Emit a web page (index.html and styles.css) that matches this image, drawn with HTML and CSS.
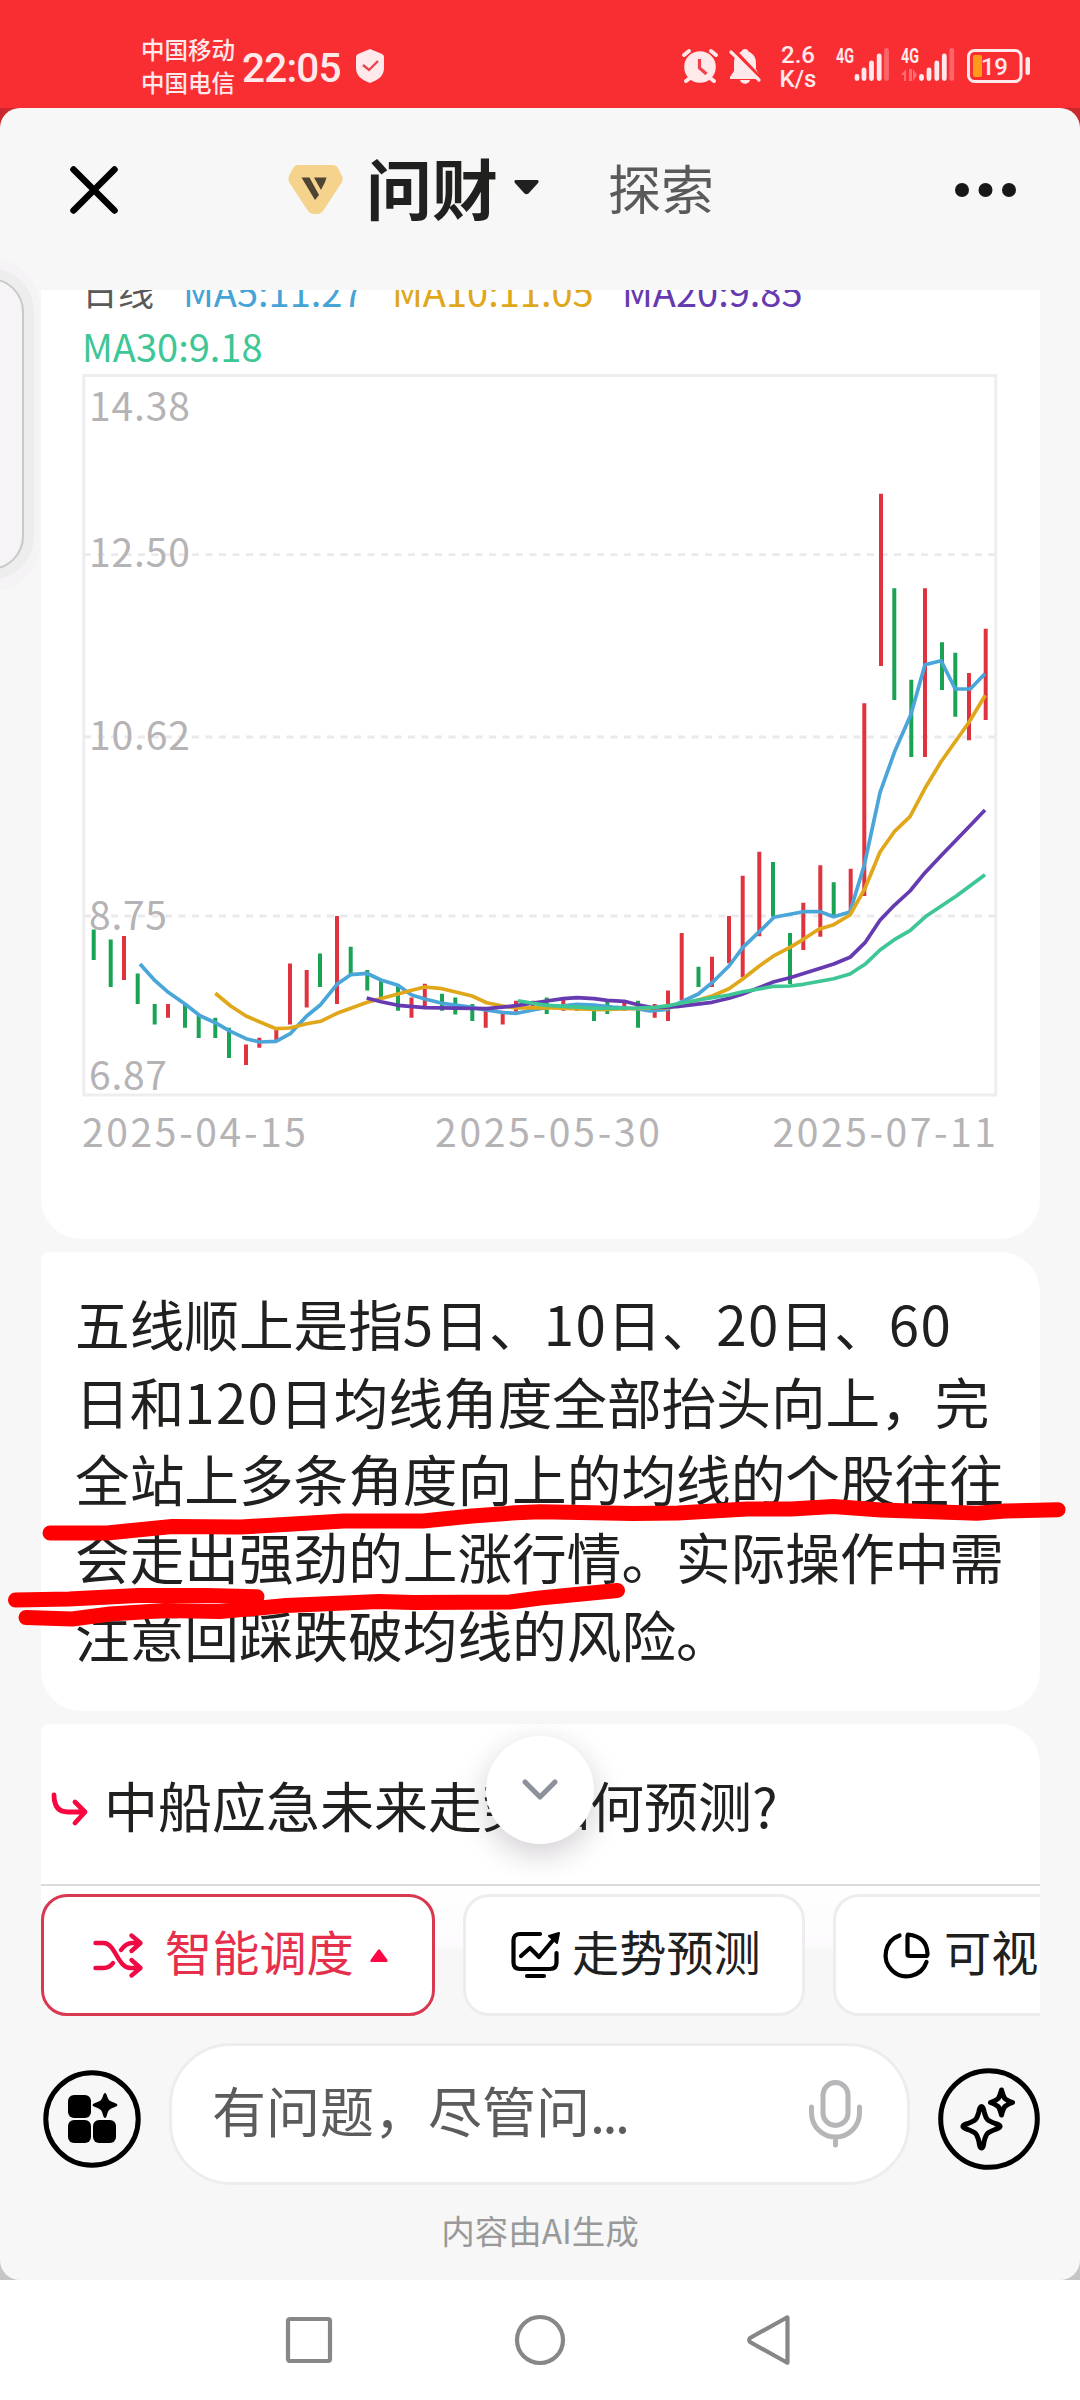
FILE: index.html
```html
<!DOCTYPE html>
<html lang="zh-CN">
<head>
<meta charset="utf-8">
<title>问财</title>
<link rel="stylesheet" href="styles.css">
</head>
<body>
<div class="phone">
  <header class="status">
    <div class="carriers"><span>中国移动</span><span>中国电信</span></div>
    <div class="clock">22:05</div>
    <svg class="shield" width="28" height="34" viewBox="0 0 28 34"><path d="M14 0 26 5q2 1 2 3v11c0 8-6 12-14 15C6 31 0 27 0 19V8q0-2 2-3z" fill="#ffe9eb"/><path d="m7 16 6 5 9-9" fill="none" stroke="#e8454d" stroke-width="2.4"/></svg>
    <svg class="alarm" width="36" height="34" viewBox="0 0 36 34"><circle cx="18" cy="18" r="15.8" fill="#ffe9eb"/><path d="M2 6 7 2M34 6l-5-4M8 29l-4 3M28 29l4 3" stroke="#ffe9eb" stroke-width="4" stroke-linecap="round"/><path d="M17.500 10v9l7 6" fill="none" stroke="#f3404a" stroke-width="3.200"/></svg>
    <svg class="bell" width="32" height="35" viewBox="0 0 32 35"><path d="M16 0c2 0 3 1 3.500 2.500C25 5 27 9 27 14v6l4 8v2H1v-2l4-6v-8C5 9 7 5 12.500 2.500 13 1 14 0 16 0zM11 31h10c-1 5-9 5-10 0z" fill="#ffe9eb"/><path d="M4 0 34 32" stroke="#f92e33" stroke-width="4"/><path d="m2 3 28 28" stroke="#ffe9eb" stroke-width="3.200" stroke-linecap="round"/></svg>
    <div class="speed"><span>2.6</span><span>K/s</span></div>
    <svg class="signal" width="118" height="38" viewBox="836 46 118 38">
      <g class="net"><text x="836" y="63" textLength="18" lengthAdjust="spacingAndGlyphs">4G</text><text x="901" y="63" textLength="18" lengthAdjust="spacingAndGlyphs">4G</text></g>
      <g stroke="#ffe9eb" stroke-width="4.800" stroke-linecap="round"><path d="M857 76.500v2M864 70v8.500M871.500 63v15.500M879.200 56v22.500M921.500 76.500v2M929 70v8.500M936.800 63v15.500M944.300 56v22.500"/><path d="M886.500 50.500v28M951.800 50.500v28" opacity=".3"/></g>
      <path d="M906 69v12h-2V75h-3zM909 69v12h3V69zM913 69v12l4-6z" fill="#ff6d73"/>
    </svg>
    <svg class="battery" width="64" height="34" viewBox="0 0 64 34"><rect x="1.500" y="1.500" width="52.500" height="31" rx="6" fill="none" stroke="#ffe9eb" stroke-width="3"/><rect x="6" y="6" width="9" height="22" rx="2" fill="#ff9a1b"/><rect x="58.500" y="8" width="4.500" height="18" rx="2" fill="#ffe9eb"/><text x="14" y="26" textLength="27">19</text></svg>
  </header>

  <div class="stage">
  <main class="sheet">
    <div class="topbar">
      <svg class="close" width="48" height="48" viewBox="0 0 48 48"><path d="m3.500 3.500 41 41m0-41-41 41" stroke="#000" stroke-width="6.500" stroke-linecap="round"/></svg>
      <svg class="badge" width="55" height="49" viewBox="0 0 55 49"><path d="M10 0h35q3 0 5 3l4 8q1.500 3 0 6L35 46q-2 3-5 3h-5q-3 0-5-3L1 17q-1.500-3 0-6l4-8q2-3 5-3z" fill="#f6d38c"/><path d="M13.500 12.500h8L31 30l-4 5zM26 12.500h12.500L37 17l-4 8z" fill="#4e4434"/></svg>
      <h1>问财</h1>
      <svg class="caret" width="25" height="15" viewBox="0 0 25 15"><path d="M1.500 0h22q2 1 .5 3L14.500 13.500q-2 1.500-4 0L1 3q-1.500-2 .5-3z" fill="#20211f"/></svg>
      <span class="explore">探索</span>
      <svg class="more" width="62" height="14" viewBox="0 0 62 14" fill="#181818"><circle cx="7" cy="7" r="7"/><circle cx="30.500" cy="7" r="7"/><circle cx="54" cy="7" r="7"/></svg>
    </div>

    <div class="feed">
      <section class="card chart-card">
        <div class="legend"><span class="day">日线</span><span class="ma5">MA5:11.27</span><span class="ma10">MA10:11.05</span><span class="ma20">MA20:9.85</span></div>
        <div class="legend second"><span class="ma30">MA30:9.18</span></div>
        <svg class="chart" width="999" height="790" viewBox="41 370 999 790">
          <rect x="83.800" y="375.500" width="912" height="719.500" class="frame"/>
          <path d="M84 554.700H995M84 737H995M84 916H995" class="grid"/>
          <g class="axis">
            <text x="89" y="421" textLength="101">14.38</text><text x="89" y="567" textLength="101">12.50</text><text x="89" y="749.500" textLength="101">10.62</text><text x="89" y="929.500" textLength="78">8.75</text><text x="89" y="1089.500" textLength="78">6.87</text>
            <text x="82" y="1147" textLength="224">2025-04-15</text><text x="435" y="1147" textLength="225">2025-05-30</text><text x="772.500" y="1147" textLength="223.500">2025-07-11</text>
          </g>
          <path class="up" d="M124 936V980M168 1004V1017.700M246 1044.500V1065M259.300 1037.700V1047.700M276.300 1027.700V1041.500M290 963.500V1024.500M306.700 970V1007.500M337 916V1004M411.500 997.500V1017.700M424.800 983.700V1007M485.700 1010.700V1027.700M502.700 1010.700V1024.500M516 1000.700V1011.700M533 1000.700V1010M563.300 998V1010.700M577 1004V1010.700M624.300 1000.700V1010.700M654.700 1004V1017.700M668 990.500V1021M681.700 933V1000M712 956.700V987M729 916V963.300M742.700 875.700V977.300M759.300 851.700V936.300M803.300 902.700V950M820.300 865.300V936.700M850.700 868.700V913M864.300 703.300V896M881 493.700V666M925 588.300V757M969 673V740.300M985.700 628.700V720"/>
          <path class="down" d="M93.700 929.500V960M110.700 939.500V987M137.700 973.500V1004M154.700 1004V1024.500M185 1004V1027.700M198.700 1014V1038M215.300 1017.700V1038M229 1027.700V1058M320 953.500V987M350.700 946.700V975M367.300 970V990.500M381 980V997.500M398 984V1010.700M442 993.700V1010.700M455.300 997.500V1014.500M472.300 1004V1021M546.700 997.500V1014M594 1005V1021M607.300 1001V1014M638 1000.700V1027.700M698.500 966.700V987M773 862V916.700M790 933V984M833.700 882.300V916M894.300 588.300V700M911.300 679.700V757M942 642.300V690M955.300 652.700V716.700"/>
          <polyline class="line l5" points="140,964 155,980.700 168.300,992.300 185,1004 200,1015.700 215.300,1022.700 229,1030.700 246,1038.700 260,1042 276,1041.300 290.700,1033.300 306.700,1016 320,1005.300 337,984.300 350.700,974.700 366.700,973.300 381,980 398,985.300 411.700,995 425,999 442,1003.300 466.700,1006.500 485.700,1010 502.700,1012.500 516.700,1013.300 533,1010 546.700,1007.500 577,1004.300 594,1005 613,1007 638,1009 650,1011 667,1009.300 681.700,1001.700 698.300,994 712,982.700 729,966 742.700,947.700 759.300,931.700 774,917.300 803.300,911.700 820.300,911.700 833.700,916.700 850,912 864.300,865 880,792.700 895,750.700 910.700,715 925,664.700 941,660.700 955.300,689 970.300,689 985,673.700"/>
          <polyline class="line l10" points="215.300,993.300 230.700,1006 246,1016 276,1028.700 290,1028 306.700,1023.700 320.700,1021.300 337,1013.300 367.300,1002.300 398,994 411.700,990.300 425,987 442,988.700 456.700,992.300 472,996 486.700,1002.700 502.700,1006 516.700,1008 546.700,1007.700 600,1009.700 638,1008.300 653,1008 668,1007.700 683,1003.700 698.300,1000 712,996 729,988.700 742.700,979 759.300,966 774,955.700 790,947.300 803.300,939.300 818.700,929.300 833.700,924.700 850,915 865,888.300 880,852 894.300,831.700 910,816.700 925,788.300 941,761.700 969,722.300 985.300,695.300"/>
          <polyline class="line l20" points="366.700,998 381,1001.700 398,1005.300 425,1007.700 486.700,1008.700 516,1005.700 546.700,1001 563.300,998.700 577,997.700 594,998.700 607.300,1000.300 624.300,1001.300 638,1004.700 653,1007.700 676.700,1006.700 712,1002.300 729,998.300 742.700,994 774,981.700 790,977.700 820.300,968.300 833.700,964 850,957.300 865,942.700 880,920.300 894.300,905.300 910,891 925,872.700 941.700,855 970,825.700 985,810"/>
          <polyline class="line l30" points="518,1000.700 533,1003.300 546.700,1005.300 600,1008.300 638,1008 654.700,1007.300 670,1005.300 698.300,1000 729,995 742.700,991.700 774,986.300 790,986 803.300,984.300 833.700,978.700 850,974 865,964.300 880,950 894.300,939.700 910,930.700 926.700,915.700 956.700,895.700 985,874.700"/>
        </svg>
      </section>

      <section class="card note">
        <p>五线顺上是指<b>5</b>日、<b>10</b>日、<b>20</b>日、<b>60</b></p>
        <p>日和<b>120</b>日均线角度全部抬头向上，完</p>
        <p>全站上多条角度向上的均线的个股往往</p>
        <p>会走出强劲的上涨行情。实际操作中需</p>
        <p>注意回踩跌破均线的风险。</p>
      </section>

      <section class="card ask">
        <svg width="38" height="34" viewBox="0 0 38 34" fill="none" stroke="#fb0540" stroke-width="4.800" stroke-linecap="round" stroke-linejoin="round"><path d="M3 3c0 12 5 17 14 17h17M24 10l10 10-10 11"/></svg>
        <span>中船应急未来走势如何预测?</span>
      </section>
    </div>

    <div class="chips">
      <div class="chip active">
        <svg width="50" height="45" viewBox="0 0 50 45" fill="none" stroke="#ee0b43" stroke-width="4.400" stroke-linecap="round" stroke-linejoin="round"><path d="M2.500 10h8c12 0 14 25 27 25h9M38.500 27l9 8-9 7.500M2.500 35h8q6 0 9.500-5M28 17q5-7 11-7h8M38.500 2.500l9 7.500-9 8"/></svg>
        <span>智能调度</span>
        <svg class="tri" width="18" height="13" viewBox="0 0 18 13"><path d="M8 .7q1-1 2 0l7.500 10.300q.7 2-1 2h-15q-1.700 0-1-2z" fill="#ff0745"/></svg>
      </div>
      <div class="chip trend">
        <svg width="50" height="48" viewBox="0 0 50 48" fill="none" stroke="#000" stroke-width="4.200" stroke-linecap="round" stroke-linejoin="round"><path d="M29 3H9Q2.500 3 2.500 9.500v22Q2.500 38 9 38h30q6.500 0 6.500-6.500V22M16 45h17M10 25l9-8 9 9L43 8"/><path d="m38 5 10-3-2 10z" fill="#000" stroke-width="2"/></svg>
        <span>走势预测</span>
      </div>
      <div class="chip visual">
        <svg width="47" height="47" viewBox="0 0 47 47" fill="none" stroke="#000" stroke-width="4.200" stroke-linecap="round" stroke-linejoin="round"><path d="M16.500 3.500A21 21 0 1 0 43.500 30M25 2.500q19 2 19.500 19.500-.2 2-2 2H27q-2.500 0-2.500-2.500V4z"/></svg>
        <span>可视化</span>
      </div>
    </div>

    <div class="composer">
      <svg width="98" height="98" viewBox="0 0 98 98"><circle cx="49" cy="49" r="46.200" fill="none" stroke="#000" stroke-width="5"/><g><rect x="25" y="25" width="23" height="23" rx="6"/><rect x="25" y="50" width="23" height="23" rx="6"/><rect x="50" y="50" width="23" height="23" rx="6"/><path d="M62 23q1 0 1.700 2c1.600 5 2.300 6 8.300 8q2.500 1.200 2.500 2t-2.500 2c-6 2-6.700 3-8.300 9q-.7 2-1.700 2t-1.700-2c-1.600-6-2.300-7-8.300-9q-2.500-1.200-2.500-2t2.500-2c6-2 6.700-3 8.300-8q.7-2 1.700-2z"/></g></svg>
      <div class="field">
        <span>有问题，尽管问<i>...</i></span>
        <svg width="53" height="68" viewBox="0 0 53 68" fill="none" stroke="#b7b5b8" stroke-width="5" stroke-linecap="round"><rect x="14" y="2.500" width="25" height="43" rx="12.500"/><path d="M2.500 27v6a24 24 0 0 0 48 0v-6M26.500 57v8"/></svg>
      </div>
      <svg width="102" height="102" viewBox="0 0 102 102" fill="none" stroke="#000" stroke-width="5" stroke-linejoin="round"><circle cx="51" cy="51" r="48.300"/><path d="M43.500 38.500c1.500 0 2 2 2.600 5 2 8 3 9 11 12 4 1.200 5 1.800 5 3s-1 1.800-5 3c-8 3-9 4-11 12-.6 4-1.100 6.500-2.600 6.500s-2-2.500-2.600-6.500c-2-8-3-9-11-12-4-1.200-5-1.800-5-3s1-1.800 5-3c8-3 9-4 11-12 .6-3 1.100-5 2.600-5z"/><path d="M63.500 22c2.500 9 2.500 9 11 12.500-8.500 3.500-8.500 3.500-11 12.500-2.500-9-2.500-9-11-12.500 8.500-3.500 8.500-3.500 11-12.500z"/></svg>
    </div>
    <div class="notice">内容由AI生成</div>
  </main>
  </div>

  <nav class="sysnav">
    <svg width="46" height="46" viewBox="0 0 46 46"><rect x="2" y="2" width="42" height="42" rx="2"/></svg>
    <svg width="50" height="50" viewBox="0 0 50 50"><circle cx="25" cy="25" r="23"/></svg>
    <svg width="43" height="50" viewBox="0 0 43 50"><path d="M40.500 3v44q0 1.500-1.500 0L3 27q-1.500-2 0-4L39 3q1.500-1.500 1.500 0z"/></svg>
  </nav>

  <div class="side-handle"><div></div></div>
  <div class="to-bottom"><svg width="36" height="22" viewBox="0 0 36 22"><path d="m3 3 15 15L33 3" fill="none" stroke="#8d919b" stroke-width="5.200" stroke-linecap="round" stroke-linejoin="round"/></svg></div>
  <svg class="marker" width="1080" height="140" viewBox="0 1490 1080 140">
    <polyline points="50,1533 107,1533 172,1526.500 241,1527 344,1521 423,1521 472,1516 516,1512.700 540,1511.700 633,1513.500 678,1513 747,1509 791,1509 833,1506.500 881,1510 977,1513.300 1005,1511 1058,1509.700"/>
    <polyline points="15.500,1600 69,1599 138,1595.500 207,1595.500 257,1596.700"/>
    <polyline points="26,1617.500 72,1619 110,1614 165,1610.500 220,1611.500 286,1605.500 379,1601.500 413,1602.500 510,1602 540,1598 617.500,1590.500"/>
  </svg>
</div>
</body>
</html>
```
FILE: styles.css
```css
* { box-sizing: border-box; }
body { margin: 0; background: #fff; }
svg { display: block; flex: none; overflow: visible; }
.phone {
  position: relative;
  width: 1080px;
  height: 2400px;
  overflow: hidden;
  display: flex;
  flex-direction: column;
  font-family: "Noto Sans CJK SC", sans-serif;
  color: #20211f;
  white-space: nowrap;
}

/* status bar */
.status {
  height: 108px;
  padding: 0 50px 0 141px;
  background: #f92e33;
  color: #ffe9eb;
  display: flex;
  align-items: flex-start;
}
.carriers { display: flex; flex-direction: column; margin-top: 33px; width: 101px; font-size: 23.5px; line-height: 33px; font-weight: 500; }
.clock { width: 114px; margin-top: 43px; font: 500 40.500px/50px Roboto, sans-serif; letter-spacing: -.8px; }
.shield { margin-top: 49px; }
.alarm { margin: 49px 11px 0 auto; }
.bell { margin-top: 49px; }
.speed { width: 55px; margin: 43px 0 0 0; padding-left: 19px; display: flex; flex-direction: column; align-items: center; font: 500 24px/24px Roboto, sans-serif; }
.signal { margin: 46px 13px 0 20px; }
.net text { font: 700 21px Roboto, sans-serif; fill: #ffe9eb; }
.battery { margin-top: 49px; margin-right: -1px; }
.battery text { font: 500 24px Roboto, sans-serif; fill: #ffe9eb; }

/* sheet */
.stage { height: 2172px; background: linear-gradient(#c9282d 0 50%, #c6c6c6 50%); }
.sheet { height: 2172px; background: #f7f7f7; border-radius: 20px; display: flex; flex-direction: column; }
.topbar { height: 182px; padding: 0 63px 19px 70px; display: flex; align-items: center; }
.badge { margin-left: 170px; }
h1 { margin: 0 0 8px 23px; font-size: 66px; line-height: 90px; font-weight: 700; }
.caret { margin: -4px 0 0 16px; }
.explore { margin: 0 auto 6px 69px; font-size: 53px; line-height: 70px; color: #5a5a5a; }

.feed { width: 999px; height: 1596px; margin-left: 41px; overflow: hidden; display: flex; flex-direction: column; gap: 13px; border-bottom: 2px solid #dcdbdc; }
.card { flex: none; background: #fff; border-radius: 8px 40px 40px 40px; }
.chart-card { height: 949px; border-radius: 0 0 40px 40px; }
.legend { height: 55px; margin-top: -27px; padding-left: 41px; display: flex; font-size: 38px; line-height: 55px; }
.legend.second { margin-top: 0; }
.day { width: 101px; font-size: 36px; color: #5a5a5a; }
.ma5 { width: 209px; color: #45a3d6; }
.ma10 { width: 230px; color: #e0a71b; }
.ma20 { color: #663ab0; }
.ma30 { color: #3ec695; }
.chart { margin-top: -3px; }
.frame { fill: none; stroke: #efedef; stroke-width: 3; }
.grid { fill: none; stroke: #ece9ec; stroke-width: 2.800; stroke-dasharray: 7 6.500; }
.axis text { font-size: 39px; fill: #b5b3b5; }
.up, .down { fill: none; stroke-width: 4; }
.up { stroke: #e03340; }
.down { stroke: #1ba354; }
.line { fill: none; stroke-width: 3.700; stroke-linejoin: round; }
.l5 { stroke: #4aa5d8; }
.l10 { stroke: #e0a71b; }
.l20 { stroke: #663ab0; }
.l30 { stroke: #3ec695; }

.note { height: 459px; padding: 32px 0 0 34px; }
.note p { margin: 0; font-size: 54.650px; line-height: 77.700px; }
.note b { font-weight: 400; letter-spacing: 1.300px; }

.ask { height: 200px; padding: 0 0 31px 10px; display: flex; align-items: center; }
.ask span { position: relative; top: -4px; margin-left: 15px; font-size: 54px; }

/* suggestion chips */
.chips { width: 999px; height: 130px; margin-left: 41px; padding-top: 8px; overflow: hidden; display: flex; gap: 28px; background: linear-gradient(#fff 0, #fdfbfd 45%, #f8f7f8 50%, #f7f7f7); }
.chip { flex: none; height: 122px; background: #fff; border: 3px solid #efecef; border-radius: 26px; display: flex; align-items: center; font-size: 47.200px; }
.chip span { position: relative; top: -5px; }
.chip.active { width: 394px; border-color: #d83950; color: #e52f4b; padding-left: 49px; }
.chip.active span { margin-left: 22px; }
.tri { margin-left: 16px; }
.trend { width: 342px; padding-left: 45px; }
.trend span { margin-left: 11px; }
.visual { width: 342px; padding-left: 47px; }
.visual span { margin-left: 14px; }

/* composer */
.composer { height: 142px; margin-top: 27px; padding: 9px 40px 0 43px; display: flex; align-items: center; justify-content: space-between; }
.field { width: 741px; height: 142px; margin: -9px 0 0 0; padding: 0 45px 0 40px; background: #fff; border: 3px solid #efecef; border-radius: 62px; display: flex; align-items: center; justify-content: space-between; font-size: 54px; color: #5c5c5c; }
.field span { position: relative; top: -5px; }
.field i { font-style: normal; letter-spacing: -2.500px; }
.notice { margin-top: 20px; text-align: center; font-size: 33.500px; line-height: 50px; color: #999; }

/* system navigation */
.sysnav { height: 120px; background: #fff; display: flex; align-items: center; padding: 0 290px 0 286px; justify-content: space-between; }
.sysnav svg { fill: none; stroke: #878787; stroke-width: 4.200; stroke-linejoin: round; }

/* floating layers */
.side-handle { position: absolute; left: -61px; top: 258px; width: 102px; height: 334px; padding: 20px 17px; border-radius: 58px; background: #f6f3f6; }
.side-handle div { height: 292px; border: 2px solid #c9c7c9; border-radius: 44px; background: #f7f4f8; box-shadow: 0 0 0 10px #eeedee; }
.to-bottom { position: absolute; left: 486px; top: 1736px; width: 108px; height: 108px; border-radius: 50%; background: #fff; box-shadow: 0 10px 30px rgba(50, 30, 50, .22); display: flex; align-items: center; justify-content: center; }
.marker { position: absolute; left: 0; top: 1490px; fill: none; stroke: #fe0000; stroke-width: 15; stroke-linecap: round; stroke-linejoin: round; }
```
